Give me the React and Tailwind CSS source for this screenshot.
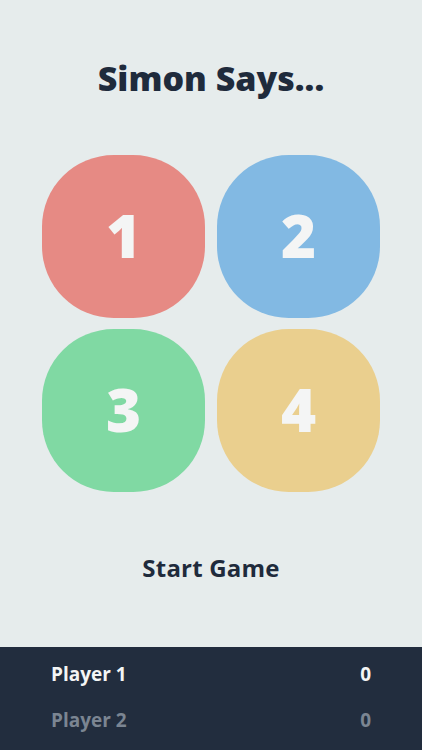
import React from "react";

const font = { fontFamily: "'Open Sans', Lato, 'Liberation Sans', sans-serif" };

function Pad({ n, color }) {
  return (
    <div className={`w-[163px] h-[163px] rounded-[44%] ${color} flex items-center justify-center`}>
      <span className="text-[60px] font-extrabold text-[#f4f5f5] leading-none -mt-[4px]">{n}</span>
    </div>
  );
}

export default function App() {
  return (
    <div className="w-[422px] h-[750px] bg-[#e6ecec] flex flex-col" style={font}>
      <div className="flex-1 flex flex-col items-center">
        <h1 className="mt-[55px] text-[34px] font-extrabold text-[#1f2b3c] leading-[46px]">Simon Says...</h1>
        <div className="mt-[54px] grid grid-cols-2 gap-x-[12px] gap-y-[11px]">
          <Pad n="1" color="bg-[#e68a84]" />
          <Pad n="2" color="bg-[#82b9e3]" />
          <Pad n="3" color="bg-[#80d9a3]" />
          <Pad n="4" color="bg-[#eacf8e]" />
        </div>
        <div className="mt-[60px] text-[24px] font-bold text-[#1f2b3c] leading-[32px] tracking-[0.2px]">Start Game</div>
      </div>
      <div className="h-[103px] bg-[#222d3e] px-[51px] pt-[13px] flex flex-col gap-[18px]">
        <div className="flex justify-between text-[19px] font-bold text-[#f4f5f5] leading-[28px]">
          <span>Player 1</span>
          <span>0</span>
        </div>
        <div className="flex justify-between text-[19px] font-bold text-[#7b8592] leading-[28px]">
          <span>Player 2</span>
          <span>0</span>
        </div>
      </div>
    </div>
  );
}
